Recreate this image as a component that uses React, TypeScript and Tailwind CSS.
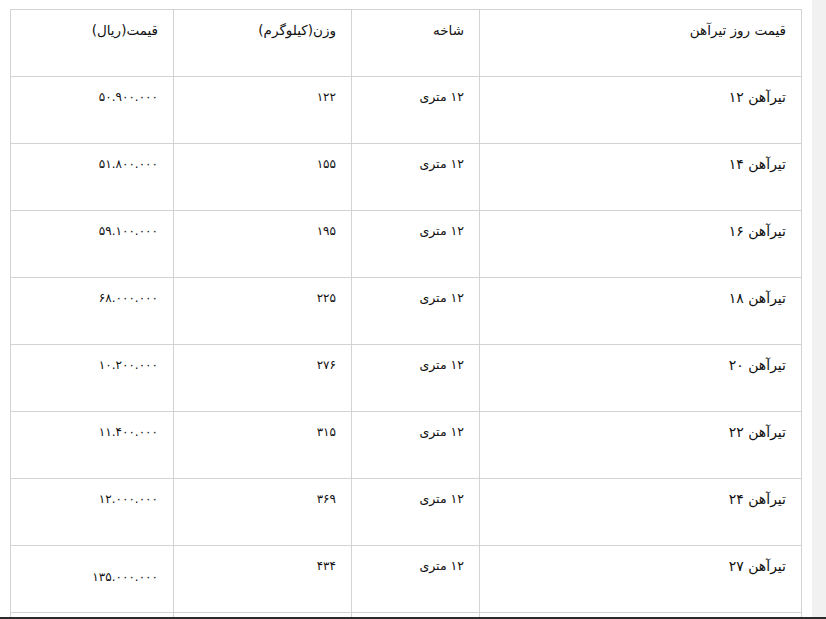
import React from 'react';

type Row = { name: string; branch: string; weight: string; price: string };

const ROWS: Row[] = [
  { name: 'تیرآهن ۱۲', branch: '۱۲ متری', weight: '۱۲۲', price: '۵۰.۹۰۰.۰۰۰' },
  { name: 'تیرآهن ۱۴', branch: '۱۲ متری', weight: '۱۵۵', price: '۵۱.۸۰۰.۰۰۰' },
  { name: 'تیرآهن ۱۶', branch: '۱۲ متری', weight: '۱۹۵', price: '۵۹.۱۰۰.۰۰۰' },
  { name: 'تیرآهن ۱۸', branch: '۱۲ متری', weight: '۲۲۵', price: '۶۸.۰۰۰.۰۰۰' },
  { name: 'تیرآهن ۲۰', branch: '۱۲ متری', weight: '۲۷۶', price: '۱۰.۲۰۰.۰۰۰' },
  { name: 'تیرآهن ۲۲', branch: '۱۲ متری', weight: '۳۱۵', price: '۱۱.۴۰۰.۰۰۰' },
  { name: 'تیرآهن ۲۴', branch: '۱۲ متری', weight: '۳۶۹', price: '۱۲.۰۰۰.۰۰۰' },
  { name: 'تیرآهن ۲۷', branch: '۱۲ متری', weight: '۴۳۴', price: '۱۳۵.۰۰۰.۰۰۰' },
];

const cell = 'border border-[#d3d3d3] h-[67px] align-top pt-[10px] pr-[15px] text-right font-normal';

export default function App() {
  return (
    <div className="flex flex-col h-[619px] overflow-hidden bg-white text-[#111] text-[12px] leading-[20px] [font-family:'DejaVu_Sans',sans-serif]">
      <div className="flex flex-1 min-h-0">
        <div className="flex-1 pl-[10px] pt-[9px] overflow-hidden">
          <table dir="rtl" className="border-collapse table-fixed w-[791px]">
            <colgroup>
              <col className="w-[322px]" />
              <col className="w-[128px]" />
              <col className="w-[178px]" />
              <col className="w-[163px]" />
            </colgroup>
            <thead>
              <tr className="text-[13.5px]">
                <th className={cell}>قیمت روز تیرآهن</th>
                <th className={cell}>شاخه</th>
                <th className={cell}>وزن(کیلوگرم)</th>
                <th className={cell}>قیمت(ریال)</th>
              </tr>
            </thead>
            <tbody>
              {ROWS.map((r, i) => (
                <tr key={r.name}>
                  <td className={`${cell} text-[14px]`}>{r.name}</td>
                  <td className={`${cell} text-[12.5px]`}>{r.branch}</td>
                  <td className={cell}>{r.weight}</td>
                  <td className={i === ROWS.length - 1 ? `${cell} !pt-[21px]` : cell}>{r.price}</td>
                </tr>
              ))}
              <tr>
                <td className={cell}></td>
                <td className={cell}></td>
                <td className={cell}></td>
                <td className={cell}></td>
              </tr>
            </tbody>
          </table>
        </div>
        <div className="w-[14px] bg-[#f1f1f1]" />
      </div>
      <div className="h-[2px] bg-[#2b2b2b]" />
    </div>
  );
}
